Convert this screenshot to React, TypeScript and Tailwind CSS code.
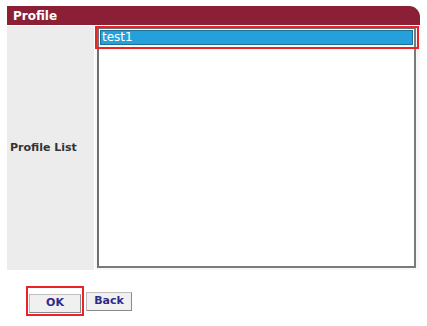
export default function App() {
  return (
    <div className="w-[427px] h-[326px] bg-white pt-[6px] px-[7px] font-['DejaVu_Sans',sans-serif]">
      <div className="w-[413px]">
        <div className="h-[19px] bg-[#8b1f35] rounded-tr-[11px] flex items-center pl-[6px] text-[12px] font-bold text-white">
          Profile
        </div>
        <div className="flex h-[244px] mt-px">
          <div className="w-[87px] bg-[#ececec] flex items-center pl-[3px] text-[11px] font-bold text-[#333]">
            Profile List
          </div>
          <div className="flex-1 ml-px bg-[#f7f7f7] pl-[2px] pt-px pr-[4px]">
            <div className="relative h-[241px] bg-white border-t-2 border-l-2 border-[#6f6f6f] border-b-2 border-r-2 border-b-[#7a7a7a] border-r-[#7a7a7a]">
              <div className="mx-[1px] mt-[1px] h-[15px] bg-[#26a0da] border border-[#1b6f99] text-white text-[12px] leading-[13px] pl-[1px]">
                test1
              </div>
              <div className="absolute -left-[4px] -top-[3px] w-[324px] h-[23px] border-2 border-[#e8242a]" />
            </div>
          </div>
        </div>
      </div>
      <div className="flex items-center mt-[16px] ml-[19px] gap-[2px]">
        <div className="border-2 border-[#e8242a] p-px">
          <button className="w-[52px] h-[19px] bg-[#f0f0f0] border border-[#bdbdbd] border-b-[#8a8a8a] border-r-[#8a8a8a] text-[11px] font-bold text-[#2b2b8c]">
            OK
          </button>
        </div>
        <button className="w-[46px] h-[19px] bg-[#f0f0f0] border border-[#bdbdbd] border-b-[#8a8a8a] border-r-[#8a8a8a] text-[11px] font-bold text-[#2b2b8c]">
          Back
        </button>
      </div>
    </div>
  )
}
